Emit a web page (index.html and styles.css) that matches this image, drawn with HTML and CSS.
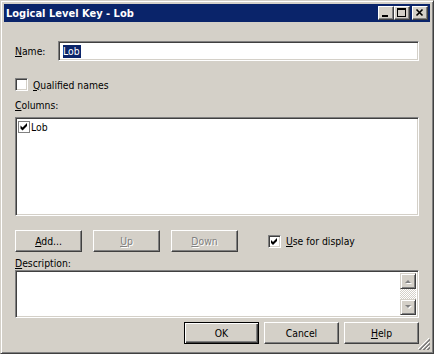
FILE: index.html
```html
<!DOCTYPE html>
<html lang="en">
<head>
  <meta charset="UTF-8">
  <title>Logical Level Key - Lob</title>
  <link rel="stylesheet" href="styles.css">
</head>
<body>

  <div class="window">
    <header class="titlebar">
      <span class="title">Logical Level Key - Lob</span>
      <div class="caption-buttons">
        <span class="cap-btn">
          <svg width="14" height="12" shape-rendering="crispEdges"><rect x="3" y="8" width="6" height="2" fill="#000"/></svg>
        </span>
        <span class="cap-btn">
          <svg width="14" height="12" shape-rendering="crispEdges">
            <rect x="2.5" y="1.5" width="8" height="8" fill="none" stroke="#000"/>
            <rect x="2" y="2" width="9" height="1" fill="#000"/>
          </svg>
        </span>
        <span class="cap-btn cap-close">
          <svg width="14" height="12">
            <path d="M3.5 2.5 L9.5 8.5 M9.5 2.5 L3.5 8.5" stroke="#000" stroke-width="1.6"/>
          </svg>
        </span>
      </div>
    </header>

    <div class="client">
      <div class="name-row">
        <label class="name-label"><u>N</u>ame:</label>
        <div class="edit"><span class="selected">Lob</span></div>
      </div>

      <div class="check-row">
        <span class="checkbox"></span>
        <span><u>Q</u>ualified names</span>
      </div>

      <div class="group-label"><u>C</u>olumns:</div>
      <div class="listbox">
        <div class="list-item">
          <span class="item-check">
            <svg width="10" height="10"><polygon points="1.5,3.5 3.5,5.5 8,1 8,4 3.5,8.5 1.5,6.5" fill="#000"/></svg>
          </span>
          <span class="item-text">Lob</span>
        </div>
      </div>

      <div class="button-row">
        <button class="btn"><span><u>A</u>dd...</span></button>
        <button class="btn disabled"><span><u>U</u>p</span></button>
        <button class="btn disabled"><span><u>D</u>own</span></button>
        <span class="checkbox display-check">
          <svg width="9" height="9"><polygon points="1,3 3,5 7,1 7,4 3,8 1,6" fill="#000"/></svg>
        </span>
        <span class="display-label"><u>U</u>se for display</span>
      </div>

      <div class="group-label desc-label"><u>D</u>escription:</div>
      <div class="textarea">
        <div class="scrollbar">
          <span class="scroll-btn">
            <svg width="14" height="14"><path d="M4 9 L10 9 L7 6 Z" fill="#fff" transform="translate(1 1)"/><path d="M4 9 L10 9 L7 6 Z" fill="#808080"/></svg>
          </span>
          <span class="scroll-track"></span>
          <span class="scroll-btn">
            <svg width="14" height="14"><path d="M4 5 L10 5 L7 8 Z" fill="#fff" transform="translate(1 1)"/><path d="M4 5 L10 5 L7 8 Z" fill="#808080"/></svg>
          </span>
        </div>
      </div>

      <div class="footer-row">
        <button class="btn wide default">OK</button>
        <button class="btn wide">Cancel</button>
        <button class="btn wide"><span><u>H</u>elp</span></button>
      </div>

      <svg class="size-grip" width="12" height="12" shape-rendering="crispEdges">
        <path d="M11 0 L0 11 M11 4 L4 11 M11 8 L8 11" stroke="#fff"/>
        <path d="M12 1 L1 12 M12 2 L2 12 M12 5 L5 12 M12 6 L6 12 M12 9 L9 12 M12 10 L10 12" stroke="#808080"/>
      </svg>
    </div>
  </div>

</body>
</html>
```

FILE: styles.css
```css
/* General */
body {
  margin: 0;
  font-family: "DejaVu Sans Condensed", "Liberation Sans", Arial, sans-serif;
  font-size: 10.3px;
  color: #000;
  background-color: #d4d0c8;
}

u {
  text-underline-offset: 1px;
}

/* Window frame */
.window {
  width: 434px;
  height: 354px;
  box-sizing: border-box;
  background-color: #d4d0c8;
  border: 1px solid;
  border-color: #d4d0c8 #404040 #404040 #d4d0c8;
  box-shadow: inset 1px 1px #fff, inset -1px -1px #808080;
  padding: 3px;
  display: flex;
  flex-direction: column;
}

.titlebar {
  height: 18px;
  flex-shrink: 0;
  background-color: #0a246a;
  color: #fff;
  font-weight: bold;
  font-size: 11px;
  display: flex;
  align-items: center;
  padding: 0 2px;
}

.title {
  flex: 1;
}

.caption-buttons {
  display: flex;
}

.cap-btn {
  width: 16px;
  height: 14px;
  box-sizing: border-box;
  background-color: #d4d0c8;
  border: 1px solid;
  border-color: #fff #404040 #404040 #fff;
  box-shadow: inset -1px -1px #808080;
  display: flex;
}

.cap-close {
  margin-left: 2px;
}

/* Client area */
.client {
  position: relative;
  flex: 1;
  padding: 0 11px;
}

.edit,
.checkbox,
.listbox,
.textarea {
  box-sizing: border-box;
  background-color: #fff;
  border: 1px solid;
  border-color: #808080 #fff #fff #808080;
  box-shadow: inset 1px 1px #404040, inset -1px -1px #d4d0c8;
}

.name-row {
  margin-top: 19px;
  height: 20px;
  display: flex;
  align-items: center;
}

.name-label {
  width: 43px;
}

.edit {
  flex: 1;
  height: 20px;
  padding-left: 4px;
  display: flex;
  align-items: center;
}

.selected {
  background-color: #0a246a;
  color: #fff;
  line-height: 13px;
  padding-right: 1px;
}

.check-row {
  margin-top: 17px;
  height: 13px;
  display: flex;
  align-items: center;
  gap: 5px;
}

.checkbox {
  width: 13px;
  height: 13px;
  flex-shrink: 0;
  display: flex;
  align-items: center;
  justify-content: center;
}

.checkbox svg {
  display: block;
}

.group-label {
  margin-top: 8px;
  line-height: 12px;
}

/* Columns list */
.listbox {
  margin-top: 6px;
  height: 99px;
  padding: 3px 2px 0;
}

.list-item {
  display: flex;
  align-items: center;
  height: 12px;
}

.item-check {
  width: 12px;
  height: 12px;
  box-sizing: border-box;
  border: 1px solid #808080;
  background-color: #fff;
  display: flex;
  align-items: center;
  justify-content: center;
}

.item-text {
  margin-left: 1px;
}

/* Buttons */
.btn {
  width: 67px;
  height: 22px;
  box-sizing: border-box;
  padding: 0;
  font: inherit;
  color: #000;
  background-color: #d4d0c8;
  border: 1px solid;
  border-color: #fff #404040 #404040 #fff;
  box-shadow: inset -1px -1px #808080;
  display: flex;
  align-items: center;
  justify-content: center;
}

.btn.disabled {
  color: #808080;
  text-shadow: 1px 1px 0 #fff;
}

.btn.default {
  border-color: #000;
  box-shadow: inset 1px 1px #fff, inset -1px -1px #404040, inset -2px -2px #808080;
}

.button-row {
  margin-top: 14px;
  height: 22px;
  display: flex;
  align-items: center;
}

.button-row .btn + .btn {
  margin-left: 11px;
}

.display-check {
  margin-left: 30px;
}

.display-label {
  margin-left: 5px;
}

.desc-label {
  margin-top: 5px;
}

/* Description box */
.textarea {
  margin-top: 1px;
  height: 48px;
  padding: 2px;
  display: flex;
  justify-content: flex-end;
}

.scrollbar {
  width: 16px;
  display: flex;
  flex-direction: column;
}

.scroll-btn {
  height: 16px;
  box-sizing: border-box;
  background-color: #d4d0c8;
  border: 1px solid;
  border-color: #d4d0c8 #404040 #404040 #d4d0c8;
  box-shadow: inset 1px 1px #fff, inset -1px -1px #808080;
  display: flex;
}

.scroll-track {
  flex: 1;
  background: repeating-conic-gradient(#fff 0 25%, #d4d0c8 0 50%) 0 0 / 2px 2px;
}

.footer-row {
  margin-top: 4px;
  height: 22px;
  display: flex;
  justify-content: flex-end;
  gap: 5px;
}

.btn.wide {
  width: 75px;
}

.size-grip {
  position: absolute;
  right: 0;
  bottom: 0;
}
```
